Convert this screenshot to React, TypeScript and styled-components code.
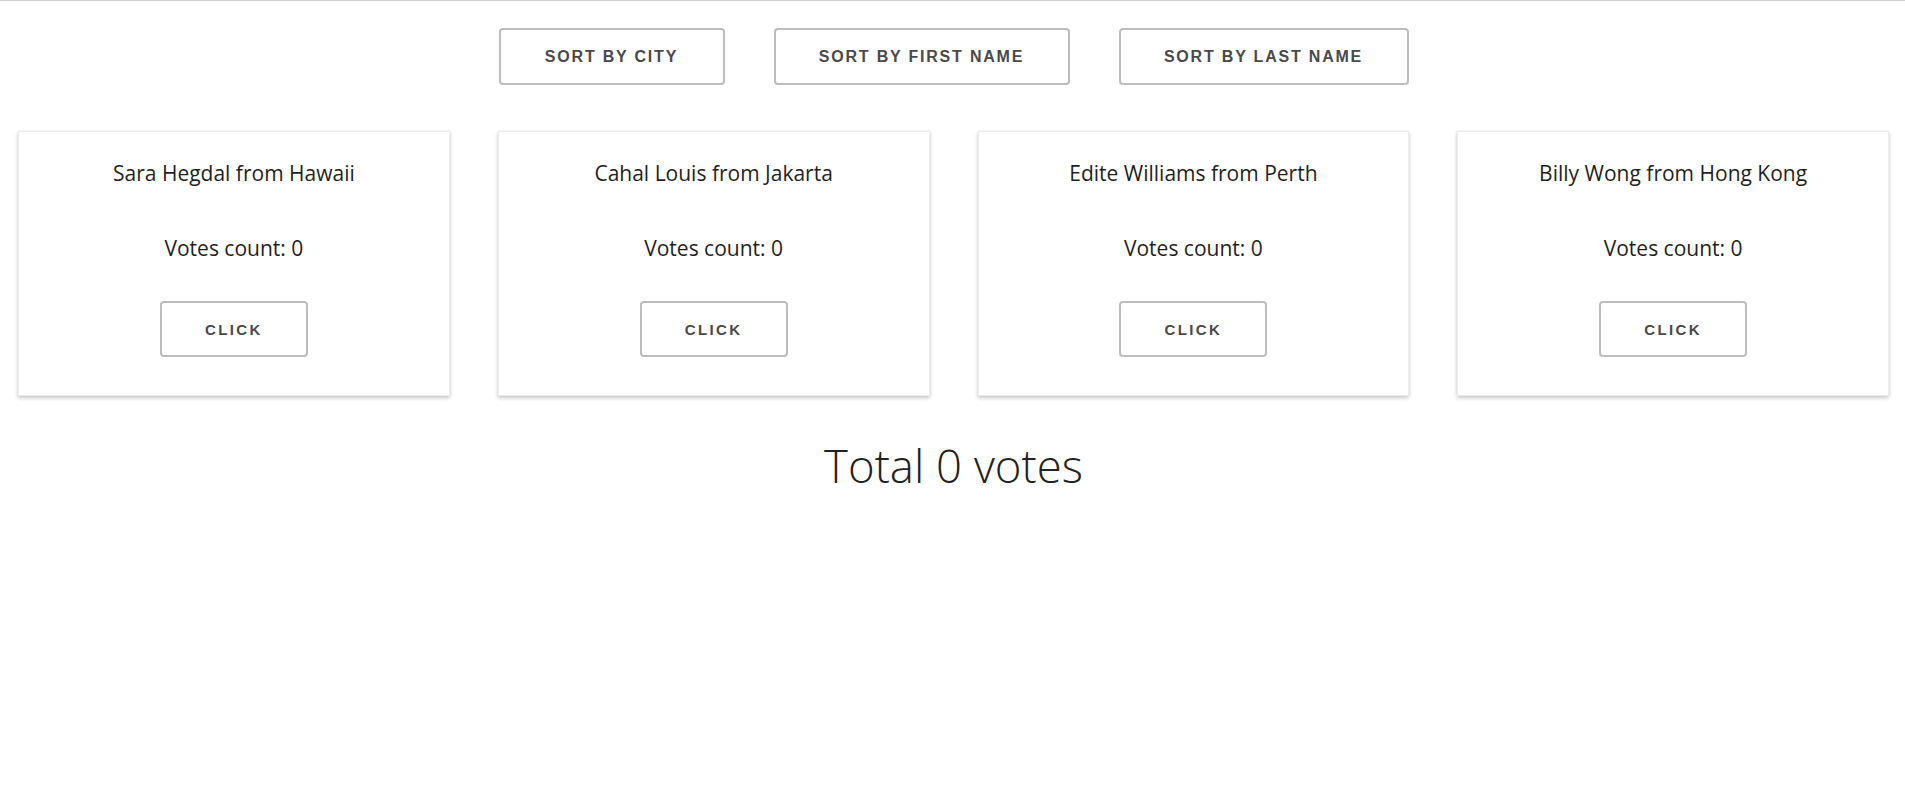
import React, { useState } from "react";
import styled, { createGlobalStyle } from "styled-components";

const GlobalStyle = createGlobalStyle`
  html, body {
    margin: 0;
    padding: 0;
    background: #fff;
  }
  body {
    font-family: "Open Sans", "Noto Sans", sans-serif;
    color: #212121;
  }
`;

const Page = styled.div`
  border-top: 1px solid #cfcfcf;
  padding: 0 16px 0 18px;
  display: flex;
  flex-direction: column;
  align-items: stretch;
`;

const SortBar = styled.div`
  display: flex;
  justify-content: center;
  gap: 49px;
  margin-top: 27px;
`;

const OutlineButton = styled.button<{ $width: number }>`
  width: ${p => p.$width}px;
  height: 57px;
  background: #fff;
  border: 2px solid #bdbdbd;
  border-radius: 4px;
  font-family: "Liberation Sans", Arial, sans-serif;
  font-weight: 700;
  font-size: 16px;
  letter-spacing: 1.8px;
  text-transform: uppercase;
  color: #4a4a4a;
  cursor: pointer;
  padding: 0;

  &:hover {
    background: #f6f6f6;
  }
`;

const CardGrid = styled.div`
  display: grid;
  grid-template-columns: repeat(4, 1fr);
  gap: 48px;
  margin-top: 46px;
`;

const Card = styled.div`
  background: #fff;
  border: 1px solid #ececec;
  box-shadow: 0 2px 4px rgba(0, 0, 0, 0.22), 0 0 2px rgba(0, 0, 0, 0.06);
  display: flex;
  flex-direction: column;
  align-items: center;
  padding: 27px 0 38px;
  height: 265px;
  box-sizing: border-box;
`;

const CardLine = styled.div<{ $gap?: number }>`
  font-size: 21px;
  line-height: 28px;
  margin-top: ${p => p.$gap ?? 0}px;
  color: #1f1f1f;
`;

const ClickButton = styled(OutlineButton)`
  height: 56px;
  margin-top: 39px;
  font-size: 15px;
  letter-spacing: 2.4px;
`;

const Total = styled.div`
  margin-top: 37px;
  text-align: center;
  font-size: 45.5px;
  font-weight: 300;
  line-height: 64px;
  color: #222;
`;

type Person = { first: string; last: string; city: string };

const people: Person[] = [
  { first: "Sara", last: "Hegdal", city: "Hawaii" },
  { first: "Cahal", last: "Louis", city: "Jakarta" },
  { first: "Edite", last: "Williams", city: "Perth" },
  { first: "Billy", last: "Wong", city: "Hong Kong" },
];

export default function App() {
  const [list, setList] = useState(people.map(p => ({ ...p, votes: 0 })));

  const sortBy = (key: keyof Person) =>
    setList([...list].sort((a, b) => a[key].localeCompare(b[key])));

  const vote = (i: number) =>
    setList(list.map((p, j) => (j === i ? { ...p, votes: p.votes + 1 } : p)));

  const total = list.reduce((s, p) => s + p.votes, 0);

  return (
    <>
      <GlobalStyle />
      <Page>
        <SortBar>
          <OutlineButton $width={226} onClick={() => sortBy("city")}>Sort by city</OutlineButton>
          <OutlineButton $width={296} onClick={() => sortBy("first")}>Sort by first name</OutlineButton>
          <OutlineButton $width={290} onClick={() => sortBy("last")}>Sort by last name</OutlineButton>
        </SortBar>
        <CardGrid>
          {list.map((p, i) => (
            <Card key={p.first}>
              <CardLine>{p.first} {p.last} from {p.city}</CardLine>
              <CardLine $gap={47}>Votes count: {p.votes}</CardLine>
              <ClickButton $width={148} onClick={() => vote(i)}>Click</ClickButton>
            </Card>
          ))}
        </CardGrid>
        <Total>Total {total} votes</Total>
      </Page>
    </>
  );
}
